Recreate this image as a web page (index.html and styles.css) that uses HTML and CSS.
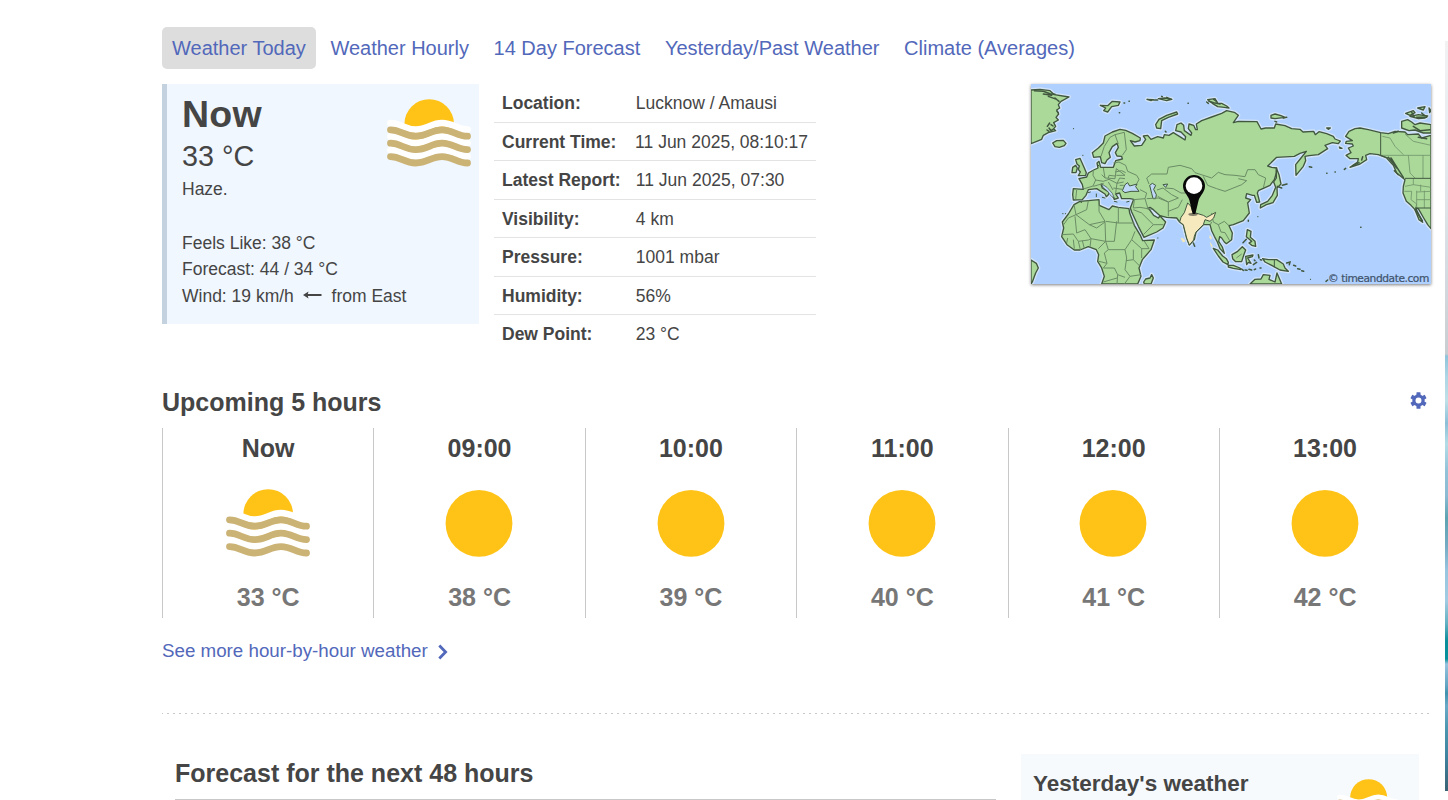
FILE: index.html
```html
<!DOCTYPE html>
<html lang="en">
<head>
<meta charset="utf-8">
<title>Weather in Lucknow</title>
<link rel="stylesheet" href="styles.css">
</head>
<body>
<svg class="defs" aria-hidden="true">
  <symbol id="haze" viewBox="0 0 84 68">
    <circle cx="42.2" cy="25" r="24.8" fill="#ffc318"/>
    <g fill="none" stroke-width="6.8" stroke-linecap="round">
      <g stroke="#fff">
        <path d="M3.5 24.2C14 24.2 17 30.6 28.8 30.6S44 24.2 55 24.2S70 30.6 80.5 30.6"/>
        <path d="M3.5 37.5C14 37.5 17 43.9 28.8 43.9S44 37.5 55 37.5S70 43.9 80.5 43.9"/>
        <path d="M3.5 50.9C14 50.9 17 57.3 28.8 57.3S44 50.9 55 50.9S70 57.3 80.5 57.3"/>
      </g>
      <g stroke="#cbb275">
        <path d="M3.5 30.8C14 30.8 17 37.2 28.8 37.2S44 30.8 55 30.8S70 37.2 80.5 37.2"/>
        <path d="M3.5 44.2C14 44.2 17 50.6 28.8 50.6S44 44.2 55 44.2S70 50.6 80.5 50.6"/>
        <path d="M3.5 57.6C14 57.6 17 64 28.8 64S44 57.6 55 57.6S70 64 80.5 64"/>
      </g>
    </g>
  </symbol>
  <symbol id="sun" viewBox="0 0 84 68"><circle cx="42" cy="34.4" r="33.4" fill="#ffc318"/></symbol>
</svg>
<div class="page">
  <main class="content">
    <nav class="tabs">
      <a class="tab active">Weather Today</a><a class="tab">Weather Hourly</a><a class="tab">14 Day Forecast</a><a class="tab">Yesterday/Past Weather</a><a class="tab">Climate (Averages)</a>
    </nav>
    <section class="overview">
      <div class="now">
        <div class="now-text">
          <h1>Now</h1>
          <div class="temp">33 °C</div>
          <p>Haze.</p>
          <p class="feels">Feels Like: 38 °C</p>
          <p>Forecast: 44 / 34 °C</p>
          <p>Wind: 19 km/h <svg class="arrow" viewBox="0 0 19 8"><path d="M0 4L5.5 .5L4.8 3H18.5V5H4.8L5.5 7.5Z" fill="#454545"/></svg> from East</p>
        </div>
        <svg class="icon"><use href="#haze"/></svg>
      </div>
      <dl class="facts">
        <div><dt>Location:</dt><dd>Lucknow / Amausi</dd></div>
        <div><dt>Current Time:</dt><dd>11 Jun 2025, 08:10:17</dd></div>
        <div><dt>Latest Report:</dt><dd>11 Jun 2025, 07:30</dd></div>
        <div><dt>Visibility:</dt><dd>4 km</dd></div>
        <div><dt>Pressure:</dt><dd>1001 mbar</dd></div>
        <div><dt>Humidity:</dt><dd>56%</dd></div>
        <div><dt>Dew Point:</dt><dd>23 °C</dd></div>
      </dl>
      <svg class="map" viewBox="18 18 1200 600">
        <defs>
          <g id="land">
            <path d="M18 36L45 34L75 38L88 50L132 57L108 70L100 80L104 90L95 96L101 108L93 118L100 126L86 134L92 145L86 152L92 158L70 164L55 172L50 184L18 197Z"/>
            <path d="M83 195L95 188L115 187L123 196L118 203L103 208L90 206Z"/>
            <path d="M18 546L34 556L40 570L32 585L22 612L18 618Z"/>
            <path d="M152 245L165 241L170 252L178 270L184 284L182 292L160 293L166 282L160 274L163 264L156 258Z"/>
            <path d="M143 268L152 262L157 270L153 284L141 284Z"/>
            <path d="M145 332L175 334L172 320L162 302L185 297L190 285L206 276L219 270L216 255L222 250L227 268L265 268L272 248L292 243L290 235L276 234L271 224L280 208L276 196L262 206L252 224L256 238L246 246L240 257L230 254L226 236L206 238L202 224L220 210L235 195L240 174L262 162L285 154L302 157L322 166L346 180L345 188L330 192L316 188L328 204L350 202L362 184L355 174L368 172L378 184L398 176L415 180L418 170L432 172L445 164L468 178L480 186L482 176L468 162L452 158L456 140L468 135L476 142L478 158L498 172L500 165L490 152L492 138L506 142L512 155L517 155L514 138L530 128L560 117L590 106L605 98L628 103L640 112L625 134L640 130L696 131L708 153L722 150L748 150L752 138L780 143L800 152L825 154L834 162L866 160L871 170L882 161L905 167L925 175L930 183L946 189L940 197L922 194L900 202L908 212L880 230L852 233L840 235L842 248L835 265L813 292L812 260L828 240L844 220L825 226L808 235L755 238L728 264L740 268L755 270L754 285L748 305L735 322L700 338L697 345L704 372L695 373L688 352L683 352L665 347L662 360L677 365L668 375L673 405L655 428L625 440L612 443L622 465L620 485L604 497L598 492L590 480L584 476L581 490L592 507L598 526L585 512L577 492L568 475L560 458L555 440L535 440L513 462L508 485L493 501L485 480L475 440L464 432L455 420L425 418L405 413L385 395L375 388L370 390L386 412L400 420L405 414L422 432L414 450L395 462L357 478L340 445L320 402L316 390L326 364L315 362L290 362L284 345L272 348L280 360L268 364L258 345L245 332L228 319L232 330L253 343L250 350L244 356L240 348L215 332L190 335L183 352L172 365L145 366L143 350Z"/>
            <path d="M165 370L190 368L222 365L223 382L252 395L262 384L280 388L312 392L314 405L328 442L346 472L353 488L388 486L378 515L352 545L342 570L348 595L338 618L230 618L238 595L230 570L218 550L221 530L214 515L190 506L165 516L148 516L126 500L110 476L116 450L112 432L130 408L147 380Z"/>
            <path d="M356 612L362 603L375 600L380 590L385 600L378 618L358 618Z"/>
            <path d="M392 140L402 124L425 112L455 102L458 108L430 118L410 128L407 152L395 150Z"/>
            <path d="M226 82L248 83L262 70L285 72L280 82L260 86L248 102L236 98L242 90Z"/>
            <path d="M548 65L570 62L578 76L590 76L605 84L612 90L598 88L578 86L562 76Z"/>
            <path d="M366 64L385 65L378 68ZM400 62L420 60L440 64L425 68ZM738 112L750 108L768 113L780 118L750 122L738 120Z"/>
            <path d="M905 150L916 150L910 154ZM943 207L951 211L945 211Z"/>
            <path d="M754 270L762 290L768 318L756 330L757 352L744 374L724 380L706 390L707 380L728 370L742 352L752 328L746 312L754 300Z"/>
            <path d="M565 511L578 516L593 534L604 542L610 553L609 560L594 552L580 534Z"/>
            <path d="M610 562L625 562L645 570L648 575L625 571L610 567Z"/>
            <path d="M621 530L638 520L652 506L662 516L656 532L650 551L632 551L623 542Z"/>
            <path d="M667 455L678 460L676 478L690 490L692 505L680 502L672 495L680 490L664 476ZM662 535L684 531L682 536L668 540L678 556L670 553L665 560ZM713 542L730 545L755 545L775 558L780 570L790 580L765 576L740 562L720 552Z"/>
            <path d="M675 618L690 604L708 603L715 590L735 592L732 604L750 612L756 585L770 618Z"/>
            <path d="M962 175L972 160L990 152L1005 150L1030 155L1067 164L1090 167L1110 160L1140 162L1148 170L1180 168L1190 180L1218 172L1218 452L1208 440L1196 420L1180 392L1172 390L1193 433L1182 425L1170 395L1158 382L1144 370L1134 345L1135 325L1140 305L1115 285L1105 262L1085 240L1060 230L1035 227L1022 232L1025 245L1005 258L975 268L998 252L1000 242L975 242L963 232L978 224L970 210L985 204L982 198L962 196L964 190L982 188Z"/>
            <path d="M1130 130L1148 125L1160 132L1170 140L1185 135L1218 140L1218 165L1195 165L1170 156L1152 158L1130 150ZM1142 106L1165 98L1170 104L1155 112ZM1155 115L1180 110L1208 114L1200 120L1180 122ZM1178 90L1200 86L1195 96ZM1212 90L1218 98L1214 104Z"/>
          </g>
        </defs>
        <rect x="18" y="18" width="1200" height="600" fill="#b0d0ff"/>
        <use href="#land" fill="none" stroke="#d3e3f8" stroke-width="12" stroke-linejoin="round"/>
        <use href="#land" fill="#aad99a" stroke="#41583f" stroke-width="4" stroke-linejoin="round"/>
        <g fill="#bfd8f8" stroke="#41583f" stroke-width="3">
          <path d="M292 338L300 320L308 314L314 324L336 318L332 326L342 340L318 340L300 344Z"/>
          <path d="M374 322L382 316L392 322L386 334L394 350L392 362L384 362L380 346Z"/>
          <path d="M414 320L428 318L422 328Z"/>
          <path stroke-width="2" d="M229 317L246 328L262 346L268 360L258 354L248 340L234 328Z"/>
        </g>
        <g fill="none" stroke="#6b8c64" stroke-width="3">
          <path d="M228 235L238 205L255 178L270 170L280 198M270 170L298 163L304 215L292 232M265 255L282 252L302 262L308 280L335 292L342 304L335 318M205 276L204 292L212 306L204 324L175 333M235 270L240 300L270 302L274 272L300 292L274 292M212 306L235 310L252 304L276 316L296 312M205 325L236 316M240 300L230 290M250 312L264 336M276 316L272 345M155 336L152 364M265 330L292 334M345 335L365 345L360 362L325 365M365 300L380 288L426 288L430 268L465 262L500 272L510 284L560 300L580 283L600 290L630 292L660 296L668 275L690 275L700 290L722 300L715 330M365 300L372 318M535 295L548 322L575 332L600 340L650 320L665 308L640 302M396 336L414 330L440 350L460 360L430 372L398 355M420 330L445 332L468 345L495 345M360 362L370 396M365 362L400 360L430 372L430 415M430 400L460 388L472 365M328 365L325 390L345 388L380 394M325 395L350 405L385 440M355 470L385 440L415 440M560 405L565 432L580 440L598 430L612 443M580 440L588 462L600 464L614 488M560 432L556 440"/>
          <path d="M147 380L153 410L130 420L116 440M190 368L185 395L153 410L193 440L240 430L222 400L222 368M193 440L215 450L240 432L242 490L198 482L180 455L155 465L150 415M280 388L280 435L242 430M280 435L328 435M242 490L268 490L275 430M112 470L145 468L160 490L190 486L198 482L195 508M128 480L125 495M145 485L148 512M160 490L166 515M172 488L178 512M242 490L220 512M242 490L250 515L300 515L320 485L330 460M250 515L238 525L246 556L222 550M300 515L305 540L300 575L315 595L348 590M320 485L350 512L372 512L357 488M350 512L350 540M325 515L325 545L345 565M325 545L303 548M246 556L235 570L268 570L278 590L276 618M315 595L298 618M278 590L300 598M276 600L235 612"/>
          <path d="M634 540L650 528M270 282L290 278L302 284M276 316L284 300L300 302M284 322L296 322M250 300L252 292L270 294"/>
          <path stroke-width="2.2" d="M1072 175L1095 180L1110 205L1135 230M1140 168L1165 190L1218 202M1067 232L1218 232M1150 232L1155 285L1170 300M1194 232V300M1165 300L1165 320L1140 325M1165 320L1218 328M1187 320V340M1138 340L1160 340L1158 365L1175 378L1172 390M1175 338V390M1175 342L1218 340M1198 338V390M1175 365L1218 365"/>
          <path stroke="#41583f" stroke-width="3" d="M1067 164V232L1090 240M1140 301H1218M1172 390H1218M748 545V568"/>
        </g>
        <path fill="#f5e9bd" stroke="#41583f" stroke-width="3" d="M488 375L498 385L503 402L535 412L545 418L572 403L566 420L555 430L540 425L535 440L513 462L508 475L506 486L493 501L485 480L475 440L464 432L468 418L478 404Z"/>
        <path fill="#f5e9bd" stroke="#f5e9bd" stroke-width="2" d="M468 480L477 484L480 490L474 492ZM555 472L560 480L558 484L554 480ZM556 494L562 504L559 506Z"/>
        <g fill="none" stroke="#41583f" stroke-width="4.5" stroke-linecap="round">
          <path d="M28 38L55 40L75 47L90 49M55 48L80 52M70 55L95 64M90 60L102 70M96 100L100 104M67 145L74 135M72 150L78 158L84 154M66 156L72 160M78 140L84 144"/>
          <path d="M386 66L398 66M410 55L412 56M425 58L440 64M552 70L566 74L585 78M566 64L575 70M545 72L550 76M489 76H490M505 495L509 505M283 104H284M297 75H299M312 70H313M421 160L423 162M1007 448H1008M670 427V430M772 322L786 318M853 266L860 268M905 286H906M930 282H931M958 274L962 271M785 555L795 552L793 560M806 562L812 564M818 572L825 574M830 578L836 580M903 610L908 606M705 570H708M650 573L655 577M660 576L666 577M685 560L695 553M672 574L680 576M688 575L692 573M700 530L702 540M688 546L690 548M706 545L710 546M664 484L654 494M750 130L755 132M775 120L785 118M757 325L770 330M1090 238L1115 270M1098 240L1120 275L1135 298M1108 278L1120 290M1170 395L1190 425M1175 400L1192 428M1160 102L1168 118M1175 118L1205 118M1165 145L1185 158L1215 155M1190 105L1198 112M1180 178L1205 182M1105 165L1120 160M985 262L1002 254M1010 246L1013 236"/>
          <path d="M190 344L196 342M214 348V356M232 358L240 360M268 370L276 372M305 372L312 370M218 260L222 264M145 152H146M173 232H174M168 373H170M113 407H114M121 407H122M398 480H399M698 416H699M856 604H857" stroke-width="3"/>
        </g>
        <ellipse cx="504" cy="409" rx="14" ry="5" fill="#222" opacity=".55"/>
        <path d="M503 408L493 366C488 350 474 342 474 324A33 33 0 0 1 540 324C540 342 526 352 521 366L511 408Z" fill="#080808"/>
        <circle cx="507" cy="323" r="25" fill="#fff"/>
        <text class="credit" x="1213" y="613" text-anchor="end" textLength="304">© timeanddate.com</text>
      </svg>
    </section>
    <section class="upcoming">
      <header><h2>Upcoming 5 hours</h2>
        <svg class="gear" viewBox="-8 -8 16 16"><g fill="#5268ba"><circle r="5.8"/><rect x="-1.9" y="-7.7" width="3.8" height="15.4" rx=".5"/><rect x="-1.9" y="-7.7" width="3.8" height="15.4" rx=".5" transform="rotate(60)"/><rect x="-1.9" y="-7.7" width="3.8" height="15.4" rx=".5" transform="rotate(120)"/></g><circle r="2.8" fill="#fff"/></svg>
      </header>
      <div class="hours">
        <div class="hour"><b>Now</b><svg class="icon"><use href="#haze"/></svg><span>33 °C</span></div>
        <div class="hour"><b>09:00</b><svg class="icon"><use href="#sun"/></svg><span>38 °C</span></div>
        <div class="hour"><b>10:00</b><svg class="icon"><use href="#sun"/></svg><span>39 °C</span></div>
        <div class="hour"><b>11:00</b><svg class="icon"><use href="#sun"/></svg><span>40 °C</span></div>
        <div class="hour"><b>12:00</b><svg class="icon"><use href="#sun"/></svg><span>41 °C</span></div>
        <div class="hour"><b>13:00</b><svg class="icon"><use href="#sun"/></svg><span>42 °C</span></div>
      </div>
      <a class="more">See more hour-by-hour weather<svg class="chevron" viewBox="0 0 10 16"><path d="M1.3 1.5L7.6 8L1.3 14.5" fill="none" stroke="#5268ba" stroke-width="2.8"/></svg></a>
    </section>
    <svg class="divider" viewBox="0 0 1269 1"><path d="M-1 .5H1269" stroke="#c8c8c8" stroke-dasharray="2 4"/></svg>
    <section class="bottom">
      <h2 class="forecast">Forecast for the next 48 hours</h2>
      <aside class="yesterday"><h3>Yesterday's weather</h3><svg class="small-icon"><use href="#haze"/></svg></aside>
    </section>
  </main>
  <div class="backdrop"></div>
</div>
</body>
</html>
```
FILE: styles.css
```css
* { box-sizing: border-box; margin: 0; padding: 0; }
body { font: 17.5px/27px "Liberation Sans", Arial, sans-serif; color: #454545; background: #fff; overflow: hidden; }
.defs { display: none; }
.page { display: flex; justify-content: space-between; height: 800px; overflow: hidden; }
.content { width: 1269px; margin-left: 162px; padding-top: 27px; flex: none; }
.backdrop { width: 3px; height: 750px; margin-top: 41px; background: linear-gradient(#f2f2f3 0, #e7edf1 100px, #d5dce1 230px, #c8cdd1 313px, #8fc4da 315px, #add5e4 335px, #bfe0e8 360px, #8cbfd8 382px, #b4dce6 403px, #92c2d8 430px, #8bbad2 455px, #5ca3b1 477px, #76abc3 505px, #98c5df 530px, #a1cbe2 560px, #61afc0 583px, #098d9b 600px, #07909c 618px, #96c3de 623px, #61a4c2 645px, #4092ae 652px, #69a9c7 665px, #4b94ae 690px, #3f83a0 715px, #396173 750px); }
.tabs { display: flex; gap: 4.6px; height: 42px; font-size: 20px; line-height: 42px; color: #5268ba; white-space: nowrap; }
.tab { padding: 0 10px; border-radius: 5px; }
.active { background: #ddd; }
.overview { display: flex; margin-top: 15px; height: 269px; }
.now { display: flex; justify-content: space-between; width: 317px; height: 240px; border-left: 5px solid #c3d2de; background: #f0f7ff; padding: 9px 8px 0 15px; }
.now-text { white-space: nowrap; }
h1 { font-size: 37.5px; line-height: 42px; letter-spacing: .2px; }
.temp { font-size: 28.75px; line-height: 42px; }
.now-text p { line-height: 26.6px; }
.now-text .temp + p { margin-top: -1px; }
.now-text .feels { margin-top: 27px; }
.arrow { width: 19px; height: 8px; margin: 0 5px 5px 4px; vertical-align: middle; }
.icon { display: block; width: 84px; height: 68px; }
.now .icon { margin: 6.4px .5px 0 -60px; flex: none; }
.facts { width: 322px; margin-left: 15px; }
.facts div { display: flex; height: 38.5px; padding: 0 8px; border-bottom: 1px solid #e3e3e3; line-height: 38px; white-space: nowrap; }
.facts div:last-child { border: 0; }
.facts dt { width: 133.8px; font-weight: bold; }
.map { width: 400px; height: 200px; margin-left: auto; box-shadow: 0 1px 3px rgba(0,0,0,.5); }
.credit { font: 32px "DejaVu Sans", sans-serif; fill: #40546c; stroke: #40546c; stroke-width: .7px; }
.upcoming { height: 313px; }
.upcoming header { display: flex; justify-content: space-between; padding-top: 34px; height: 75px; }
h2 { font-size: 25px; line-height: 31px; }
.gear { width: 17px; height: 17px; margin: 4.5px 4px 0 0; }
.hours { display: grid; grid-template-columns: repeat(6, 211.38px); height: 190px; }
.hour { border-left: 1px solid #c8c8c8; display: flex; flex-direction: column; align-items: center; font-size: 25px; line-height: 40px; }
.hour .icon { margin: 20.5px 0 19.5px -.6px; }
.hour span { color: #777; font-weight: bold; line-height: 42px; }
.more { display: flex; align-items: center; font-size: 18.75px; color: #5268ba; margin-top: 19px; }
.chevron { width: 10px; height: 16px; margin: 3px 0 0 10.5px; }
.divider { display: block; width: 1269px; height: 1px; margin-top: 47px; }
.bottom { display: flex; justify-content: space-between; padding: 40px 12px 0 13px; }
.forecast { width: 821px; height: 46px; padding-top: 4px; border-bottom: 1px solid #c8c8c8; }
.yesterday { display: flex; justify-content: space-between; width: 398px; height: 120px; background: #f6fafd; padding: 14px 19px 0 12px; }
h3 { font-size: 22.5px; line-height: 31px; }
.small-icon { width: 63px; height: 51px; margin-top: 11px; }
```
